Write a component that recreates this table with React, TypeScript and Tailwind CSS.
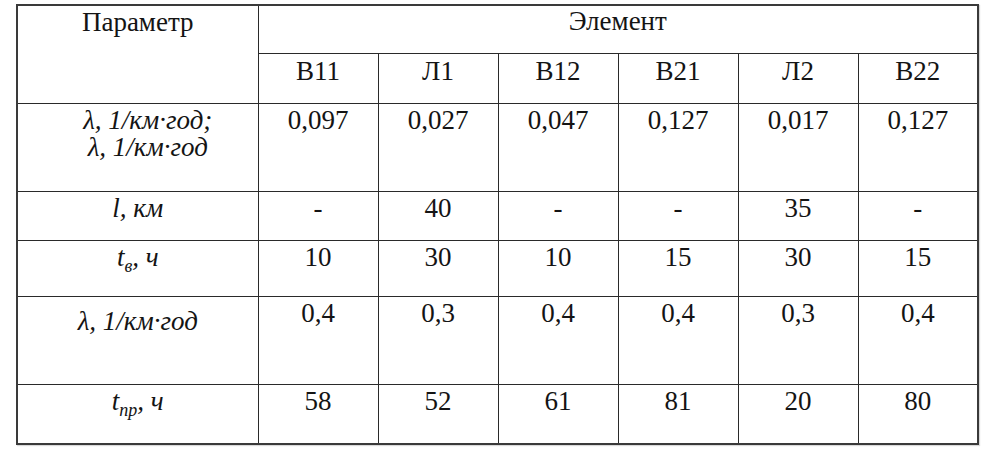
const elements = ["В11", "Л1", "В12", "В21", "Л2", "В22"];

const rows: { label: React.ReactNode; values: string[]; h: string; labelPad?: string }[] = [
  {
    label: (
      <>
        λ, 1/км·год;
        <br />
        λ, 1/км·год
      </>
    ),
    values: ["0,097", "0,027", "0,047", "0,127", "0,017", "0,127"],
    h: "h-[88px]",
    labelPad: "pl-[20px]",
  },
  {
    label: "l, км",
    values: ["-", "40", "-", "-", "35", "-"],
    h: "h-[49px]",
  },
  {
    label: (
      <>
        t<sub className="text-[18px] align-[-2px]">в</sub>, ч
      </>
    ),
    values: ["10", "30", "10", "15", "30", "15"],
    h: "h-[56px]",
  },
  {
    label: "λ, 1/км·год",
    values: ["0,4", "0,3", "0,4", "0,4", "0,3", "0,4"],
    h: "h-[88px]",
    labelPad: "pt-[11px]",
  },
  {
    label: (
      <>
        t<sub className="text-[18px] align-[-2px]">пр</sub>, ч
      </>
    ),
    values: ["58", "52", "61", "81", "20", "80"],
    h: "h-[60px]",
  },
];

export default function App() {
  return (
    <div className="h-[456px] w-[1000px] bg-white pl-[16px] pt-[4px] font-serif text-[27px] leading-[27px] text-[#141414]">
      <table className="w-[961px] table-fixed border-collapse border-2 border-[#3a3a3a] font-['Times_New_Roman','Liberation_Serif',serif] shadow-[1px_1px_1px_rgba(0,0,0,0.15)]">
        <colgroup>
          <col className="w-[241px]" />
          {elements.map((e) => (
            <col key={e} className="w-[120px]" />
          ))}
        </colgroup>
        <tbody>
          <tr className="h-[48px]">
            <td rowSpan={2} className="border border-[#2a2a2a] pt-[3px] text-center align-top">
              Параметр
            </td>
            <td colSpan={6} className="border border-[#2a2a2a] pt-[2px] text-center align-top">
              Элемент
            </td>
          </tr>
          <tr className="h-[50px]">
            {elements.map((e) => (
              <td key={e} className="border border-[#2a2a2a] pt-[4px] text-center align-top">
                {e}
              </td>
            ))}
          </tr>
          {rows.map((r, i) => (
            <tr key={i} className={r.h}>
              <td
                className={`border border-[#2a2a2a] pt-[3px] text-center align-top italic ${r.labelPad ?? ""}`}
              >
                {r.label}
              </td>
              {r.values.map((v, j) => (
                <td key={j} className="border border-[#2a2a2a] pt-[3px] text-center align-top">
                  {v}
                </td>
              ))}
            </tr>
          ))}
        </tbody>
      </table>
    </div>
  );
}
